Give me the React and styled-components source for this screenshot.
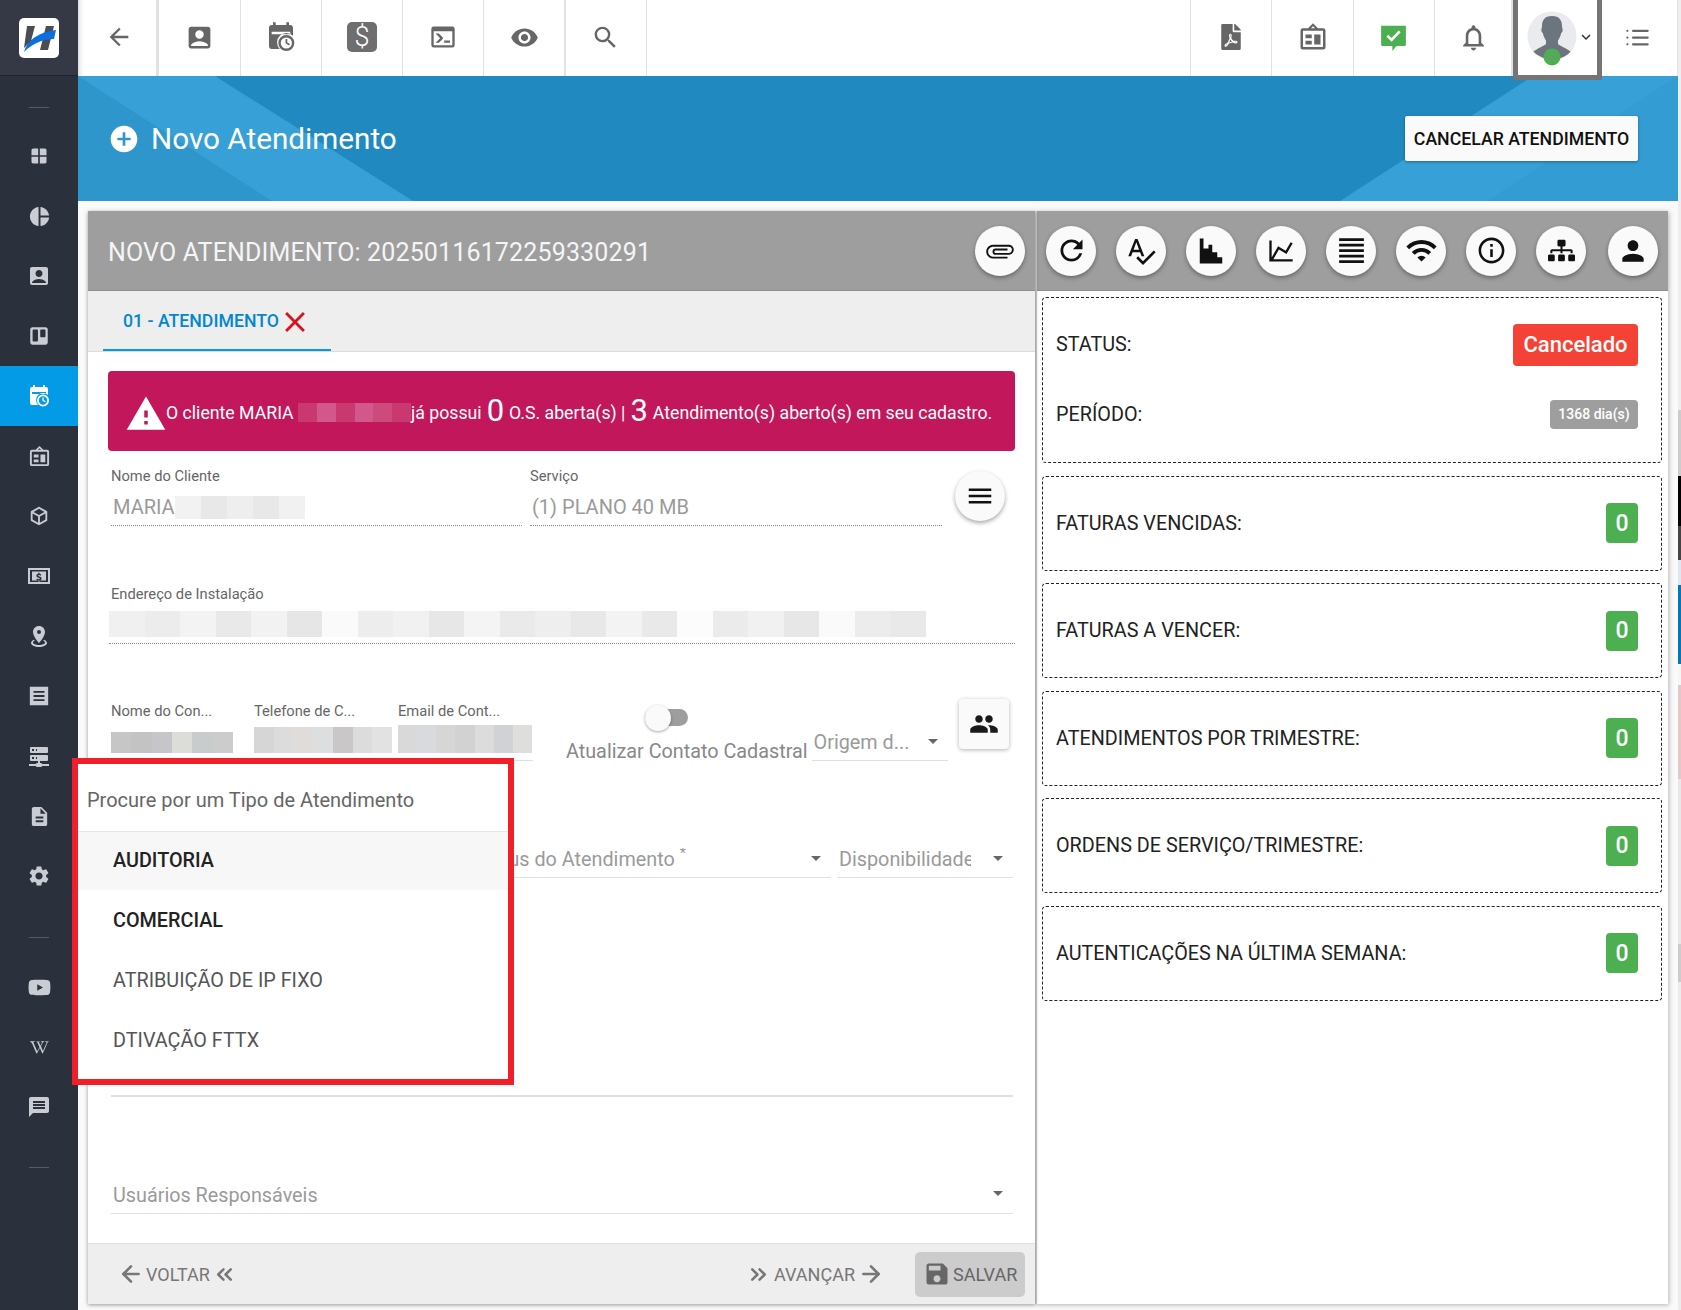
import React from 'react';
import styled, { createGlobalStyle } from 'styled-components';
import {
  MdArrowBack, MdAccountBox, MdVisibility, MdSearch, MdNotificationsNone,
  MdKeyboardArrowDown, MdWindow, MdPieChart, MdDescription, MdSettings, MdMessage,
  MdAddCircle, MdAttachFile, MdRefresh, MdSpellcheck, MdFormatAlignJustify, MdWifi,
  MdInfoOutline, MdPerson, MdClose, MdWarning, MdMenu, MdPeople, MdSave,
} from 'react-icons/md';
import { FaFilePdf, FaTrello, FaYoutube, FaWikipediaW, FaSitemap } from 'react-icons/fa';
import { FiList, FiArrowLeft, FiArrowRight, FiChevronsLeft, FiChevronsRight } from 'react-icons/fi';

const GlobalStyle = createGlobalStyle`
  html, body { margin: 0; padding: 0; height: 100%; background: #fafafa; }
  body { font-family: Roboto, "Liberation Sans", sans-serif; color: #222; }
  * { box-sizing: border-box; }
`;

// desenhos que nao existem nos pacotes
const CalendarClock = ({ size = 30 }) => (
  <svg width={size} height={size} viewBox="0 0 24 24" fill="currentColor">
    <path d="M5 21c-1.100 0-2-.9-2-2V5c0-1.100.9-2 2-2h1V1h2v2h8V1h2v2h1c1.100 0 2 .9 2 2v6.100A7 7 0 0 0 11.100 21H5zM5 8v2h14V8H5z" />
    <path d="M16 10.500a6 6 0 1 0 0 12 6 6 0 0 0 0-12zm0 10.200a4.200 4.200 0 1 1 0-8.400 4.200 4.200 0 0 1 0 8.400zm-.6-7.200h1.300v2.600l2 1.200-.6 1-2.700-1.600v-3.200z" />
  </svg>
);

const Console = ({ size = 30 }) => (
  <svg width={size} height={size} viewBox="0 0 24 24" fill="currentColor">
    <path d="M20 19V7H4v12h16m0-16a2 2 0 0 1 2 2v14a2 2 0 0 1-2 2H4a2 2 0 0 1-2-2V5a2 2 0 0 1 2-2h16m-7 14v-2h5v2h-5m-3.420-4L5.570 9H8.400l3.300 3.300c.39.39.39 1.030 0 1.420L8.420 17H5.590l3.990-4z" />
  </svg>
);

const Board = ({ size = 30 }) => (
  <svg width={size} height={size} viewBox="0 0 24 24" fill="currentColor">
    <path d="M12 1l4 4h4a2 2 0 0 1 2 2v13a2 2 0 0 1-2 2H4a2 2 0 0 1-2-2V7a2 2 0 0 1 2-2h4l4-4zm0 2.400L10.400 5h3.200L12 3.400zM4 7v13h16V7H4zm2 3h5v3H6v-3zm0 5h5v3H6v-3zm7-5h5v8h-5v-8z" />
  </svg>
);

const ChatCheck = () => (
  <svg width="27" height="27" viewBox="0 0 24 24">
    <path fill="#4caf50" d="M1 1.500h22v17a1 1 0 0 1-1 1h-7.500L11 24v-4.500H2a1 1 0 0 1-1-1z" />
    <path fill="none" stroke="#fff" strokeWidth="2.400" d="M6.500 10.500l3.800 3.600 7.200-7.600" />
  </svg>
);

const Avatar = () => (
  <svg width="50" height="56" viewBox="0 0 50 56">
    <circle cx="25" cy="25" r="24.500" fill="#e9ebef" />
    <path fill="#6c757d" d="M25 5c8 0 10 5 10 10 0 2 1 3 .6 5-.3 1.300-1 2-1.400 2-.6 3-2 6-3.200 7.500v3.500c2 2 8 4 12.500 7.500-3 4-7 6-18.500 9.500C13.500 46 9.500 44 6.500 40.500c4.500-3.500 10.500-5.500 12.500-7.500v-3.500C17.800 28 16.400 25 15.800 22c-.4 0-1.100-.7-1.400-2-.4-2 .6-3 .6-5C15 10 17 5 25 5z" />
    <circle cx="25" cy="46" r="8.500" fill="#4caf50" />
    <path fill="none" stroke="#7a8f7e" strokeWidth="1.500" d="M20.500 46l3.200 3 6-6.500" />
  </svg>
);

const Logo = () => (
  <svg width="40" height="40" viewBox="0 0 40 40">
    <rect width="40" height="40" rx="5" fill="#fff" />
    <path fill="#4a4d52" d="M8 8h8l-4 15-7 7zM27 8h8l-6 24h-8z" />
    <path fill="#0c6fe0" d="M37 12l-2 9c-11 0-21 4-30 13 3-12 15-20 32-22z" />
  </svg>
);

const MapMarker = ({ size = 22 }) => (
  <svg width={size} height={size} viewBox="0 0 24 24" fill="currentColor">
    <path d="M12 2c3.310 0 6 2.660 6 5.950C18 12.410 12 19 12 19S6 12.410 6 7.950C6 4.660 8.690 2 12 2m0 4a2 2 0 0 0-2 2 2 2 0 0 0 2 2 2 2 0 0 0 2-2 2 2 0 0 0-2-2m8 13c0 2.210-3.580 4-8 4s-8-1.790-8-4c0-1.290 1.220-2.440 3.110-3.170l.64.910C6.670 17.190 6 17.810 6 18.500 6 19.880 8.690 21 12 21s6-1.120 6-2.500c0-.690-.670-1.310-1.750-1.760l.640-.910C18.780 16.560 20 17.710 20 19z" />
  </svg>
);

const ServerNetwork = ({ size = 24 }) => (
  <svg width={size} height={size} viewBox="0 0 24 24" fill="currentColor">
    <path d="M13 19h1a1 1 0 0 1 1 1h7v2h-7a1 1 0 0 1-1 1h-4a1 1 0 0 1-1-1H2v-2h7a1 1 0 0 1 1-1h1v-2H4a1 1 0 0 1-1-1v-4a1 1 0 0 1 1-1h16a1 1 0 0 1 1 1v4a1 1 0 0 1-1 1h-7v2M4 3h16a1 1 0 0 1 1 1v4a1 1 0 0 1-1 1H4a1 1 0 0 1-1-1V4a1 1 0 0 1 1-1m5 4h1V5H9v2m0 8h1v-2H9v2M5 5v2h2V5H5m0 8v2h2v-2H5z" />
  </svg>
);

const Receipt = ({ size = 22 }) => (
  <svg width={size} height={size} viewBox="0 0 24 24" fill="currentColor">
    <path d="M2 2h20v20H2zM6 6.500v2h12v-2zM6 11v2h12v-2zM6 15.500v2h12v-2z" fillRule="evenodd" />
  </svg>
);

const Cash = ({ size = 24 }) => (
  <svg width={size} height={size} viewBox="0 0 24 24" fill="currentColor">
    <path fillRule="evenodd" d="M1 4h22v16H1zM3 6v12h18V6zM5 7.500h14v9H5zM12.700 8.800h-1.400v1c-1.200.2-1.900 1-1.900 2 0 1.200 1 1.700 2.200 2 .9.2 1.200.4 1.200.8 0 .4-.4.700-1 .7-.7 0-1.200-.3-1.600-.8l-.9.9c.4.600 1.100 1 2 1.100v.9h1.400v-.9c1.200-.2 1.900-1 1.900-2 0-1.300-1-1.800-2.200-2.100-.9-.2-1.200-.4-1.200-.7 0-.4.300-.6.900-.6.600 0 1 .2 1.400.6l.8-1c-.5-.5-1.100-.8-1.800-.9z" />
  </svg>
);

const CubeOutline = ({ size = 24 }) => (
  <svg width={size} height={size} viewBox="0 0 24 24" fill="currentColor">
    <path d="M21 16.500c0 .38-.21.71-.53.88l-7.900 4.440c-.16.12-.36.18-.57.18s-.41-.06-.57-.18l-7.900-4.440A.991.991 0 0 1 3 16.500v-9c0-.38.21-.71.53-.88l7.900-4.440c.16-.12.36-.18.57-.18s.41.06.57.18l7.900 4.440c.32.170.53.500.53.880v9M12 4.150L6.040 7.500 12 10.850l5.960-3.350L12 4.150M5 15.910l6 3.380v-6.710L5 9.210v6.700m14 0v-6.700l-6 3.370v6.710l6-3.380z" />
  </svg>
);

const Steps = ({ size = 30 }) => (
  <svg width={size} height={size} viewBox="0 0 24 24" fill="currentColor">
    <path d="M3 2h3v8h4V7h3v6h4v4h4v5H3z" />
  </svg>
);

const ChartLine = ({ size = 28 }) => (
  <svg width={size} height={size} viewBox="0 0 24 24" fill="currentColor">
    <path d="M16 11.780l4.240-7.330 1.730 1L16.740 14.500l-6.510-3.750L5.460 19H22v2H2V3h2v14.540L9.500 8z" />
  </svg>
);

const LOGO_ICONS = [
  { id: 'm1', icon: <MdWindow size={20} /> },
  { id: 'm2', icon: <MdPieChart size={23} /> },
  { id: 'm3', icon: <MdAccountBox size={24} /> },
  { id: 'm4', icon: <FaTrello size={20} /> },
  { id: 'm5', icon: <CalendarClock size={24} />, active: true },
  { id: 'm6', icon: <Board size={23} /> },
  { id: 'm7', icon: <CubeOutline size={22} /> },
  { id: 'm8', icon: <Cash size={24} /> },
  { id: 'm9', icon: <MapMarker size={24} /> },
  { id: 'm10', icon: <Receipt size={22} /> },
  { id: 'm11', icon: <ServerNetwork size={24} /> },
  { id: 'm12', icon: <MdDescription size={23} /> },
  { id: 'm13', icon: <MdSettings size={24} /> },
];

const EXTRA_ICONS = [
  { id: 'e1', icon: <FaYoutube size={23} /> },
  { id: 'e2', icon: <FaWikipediaW size={19} /> },
  { id: 'e3', icon: <MdMessage size={24} /> },
];

const TOOLS = [
  { id: 't1', icon: <MdRefresh size={33} /> },
  { id: 't2', icon: <MdSpellcheck size={32} /> },
  { id: 't3', icon: <Steps /> },
  { id: 't4', icon: <ChartLine /> },
  { id: 't5', icon: <MdFormatAlignJustify size={33} /> },
  { id: 't6', icon: <MdWifi size={33} /> },
  { id: 't7', icon: <MdInfoOutline size={31} /> },
  { id: 't8', icon: <FaSitemap size={27} /> },
  { id: 't9', icon: <MdPerson size={32} /> },
];

const COUNTERS = [
  'FATURAS VENCIDAS:',
  'FATURAS A VENCER:',
  'ATENDIMENTOS POR TRIMESTRE:',
  'ORDENS DE SERVIÇO/TRIMESTRE:',
  'AUTENTICAÇÕES NA ÚLTIMA SEMANA:',
];

const TIPOS = [
  { label: 'AUDITORIA', bold: true, hover: true },
  { label: 'COMERCIAL', bold: true },
  { label: 'ATRIBUIÇÃO DE IP FIXO' },
  { label: 'DTIVAÇÃO FTTX' },
];

const MOSAIC = {
  alert: ['#c9386f', '#d2578a', '#c9386f', '#d2578a', '#cd4a7d', '#c9386f'],
  name: ['#f2f2f2', '#e8e8e8', '#eeeeee', '#e8e8e8', '#f1f1f1'],
  addr: ['#f0f0f0', '#ececec', '#f3f3f3', '#e9e9e9', '#f2f2f2', '#e6e6e6', '#fafafa', '#ededed', '#f1f1f1', '#e7e7e7', '#f4f4f4', '#eaeaea', '#eeeeee', '#e8e8e8', '#f3f3f3', '#e9e9e9', '#fcfcfc', '#ebebeb', '#f1f1f1', '#e7e7e7', '#fafafa', '#ececec', '#e9e9e9'],
  c1: ['#c6c6c6', '#c3c3c3', '#c6c6ca', '#dcdcd8', '#c8cccc', '#cccccc'],
  c2: ['#d6d6d6', '#dcdcdc', '#dfdcda', '#dcdee0', '#c9c7c8', '#dcdcdc', '#e2e2e2'],
  c3: ['#d9d9d9', '#d8dade', '#d6d6d6', '#d2d2d2', '#dcdcdc', '#d0d2d6', '#dededc'],
};

const Page = styled.div`
  position: relative;
  display: flex;
  width: 100%;
  height: 100vh;
  overflow: hidden;
`;

const Sidebar = styled.nav`
  flex: 0 0 78px;
  background: #2b303d;
  color: #c9ccd3;
`;

const LogoBox = styled.div`
  height: 76px;
  display: flex;
  align-items: center;
  justify-content: center;
  background: #343945;
  border-bottom: 1px solid #20242e;
`;

const SideRule = styled.div`
  height: ${(p) => p.$h}px;
  padding-top: ${(p) => p.$top}px;
  &::before {
    content: '';
    display: block;
    width: 20px;
    height: 1px;
    margin: 0 auto;
    background: #555a66;
  }
`;

const SideItem = styled.div`
  height: 60px;
  display: flex;
  align-items: center;
  justify-content: center;
  background: ${(p) => (p.$active ? '#039be5' : 'transparent')};
  color: ${(p) => (p.$active ? '#fff' : '#c9ccd3')};
`;

const Main = styled.main`
  flex: 1;
  min-width: 0;
  display: flex;
  flex-direction: column;
`;

const TopBar = styled.header`
  flex: 0 0 76px;
  height: 76px;
  min-height: 0;
  display: flex;
  background: #fff;
  position: relative;
  z-index: 3;
  margin-right: 3px;
  box-shadow: inset 6px 0 6px -6px rgba(0, 0, 0, 0.25);
`;

const TopCell = styled.div`
  flex: 0 0 ${(p) => p.$w || 81.3}px;
  display: flex;
  align-items: center;
  justify-content: center;
  padding-left: ${(p) => p.$padLeft || 0}px;
  padding-right: ${(p) => p.$pad || 0}px;
  padding-bottom: 2px;
  color: #666;
  border-right: ${(p) => p.$line || 1}px solid #e2e2e2;
`;

const TopGap = styled.div`
  flex: 1;
  border-right: 1px solid #e2e2e2;
`;

const DollarBox = styled.div`
  width: 30px;
  height: 30px;
  border-radius: 5px;
  background: #6e6e6e;
  color: #fff;
  display: flex;
  align-items: center;
  justify-content: center;
  font-size: 27px;
  font-weight: 300;
`;

const AvatarCell = styled.div`
  position: relative;
  flex: 0 0 89px;
  height: 80px;
  display: flex;
  align-items: flex-start;
  padding: 11px 0 0 9px;
  background: #fff;
  color: #333;
  border: solid #757575;
  border-width: 0 5px 5px 5px;
  & > svg:last-child { margin-top: 17px; }
`;

const Hero = styled.section`
  flex: 0 0 125px;
  position: relative;
  display: flex;
  align-items: center;
  justify-content: space-between;
  padding: 0 40px 0 30px;
  margin-right: 3px;
  background: #2089bf;
  overflow: hidden;
`;

const HeroStripe = styled.div`
  position: absolute;
  inset: 0;
  background: ${(p) => p.$bg};
  clip-path: polygon(${(p) => p.$points});
`;

const HeroTitle = styled.h1`
  position: relative;
  z-index: 1;
  margin: 0;
  display: flex;
  align-items: center;
  gap: 11px;
  color: #fff;
  font-size: 29.7px;
  font-weight: 400;
`;

const CancelButton = styled.button`
  position: relative;
  z-index: 1;
  width: 233px;
  height: 45px;
  border: 0;
  border-radius: 2px;
  background: #fafafa;
  color: #111;
  font: 500 17.700px Roboto, sans-serif;
  box-shadow: 0 1px 3px rgba(0, 0, 0, 0.35);
`;

const Content = styled.div`
  flex: 1;
  min-height: 0;
  display: flex;
  padding: 10px 13px 6px 10px;
`;

const LeftPanel = styled.section`
  position: relative;
  flex: 0 0 947px;
  width: 947px;
  min-width: 0;
  display: flex;
  flex-direction: column;
  background: #fff;
  box-shadow: 0 1px 4px rgba(0, 0, 0, 0.4);
`;

const RightPanel = styled.section`
  flex: 1;
  min-width: 0;
  display: flex;
  flex-direction: column;
  background: #fff;
  border-left: 2px solid #cfcfcf;
  box-shadow: 1px 1px 5px rgba(0, 0, 0, 0.28);
`;

const PanelHead = styled.div`
  flex: 0 0 80px;
  display: flex;
  align-items: center;
  background: #9e9e9e;
  padding: ${(p) => (p.$tools ? '0 0 0 9px' : '0 10px 0 20px')};
  gap: ${(p) => (p.$tools ? '20px' : '0')};
  justify-content: ${(p) => (p.$tools ? 'flex-start' : 'space-between')};
  border-bottom: 1px solid #8e8e8e;
`;

const PanelTitle = styled.div`
  color: #f5f5f5;
  font-size: 25px;
  letter-spacing: 0.15px;
  padding-top: 3px;
`;

const RoundButton = styled.button`
  flex: 0 0 50px;
  height: 50px;
  padding: 0;
  border: 0;
  border-radius: 50%;
  background: #fafafa;
  color: #111;
  display: flex;
  align-items: center;
  justify-content: center;
  box-shadow: 0 2px 4px rgba(0, 0, 0, 0.35);
  &:last-child { margin-left: 2px; }
`;

const ClipIcon = styled(MdAttachFile)`
  transform: rotate(90deg);
`;

const TabBar = styled.div`
  flex: 0 0 61px;
  background: #eeeeee;
  border-bottom: 1px solid #dcdcdc;
  padding-left: 15px;
`;

const Tab = styled.div`
  width: 228px;
  height: 60px;
  display: flex;
  align-items: center;
  padding: 2px 0 0 20px;
  color: #0288d1;
  font-size: 17.700px;
  font-weight: 500;
  border-bottom: 2px solid #039be5;
  svg { color: #d9111a; margin: 2px -7px 0 -1px; }
`;

const Body = styled.div`
  flex: 1;
  min-height: 0;
  padding: 19px 20px 0;
`;

const Alert = styled.div`
  height: 80px;
  display: flex;
  align-items: center;
  padding: 3px 0 0 20px;
  border-radius: 4px;
  background: #c2185b;
  color: #fff;
  font-size: 17.700px;
  white-space: pre;
  overflow: hidden;
`;

const AlertIcon = styled(MdWarning)`
  margin: 3px -1px 0 -3px;
`;

const BigNumber = styled.span`
  font-size: 31px;
  line-height: 1;
  margin: 0 5px 5px 5px;
`;

const Mosaic = styled.div`
  display: flex;
  flex: ${(p) => (p.$w ? `0 0 ${p.$w}px` : '1')};
  height: ${(p) => p.$h}px;
`;

const Tile = styled.span`
  flex: 1;
  background: ${(p) => p.$c};
`;

const Row = styled.div`
  display: flex;
  align-items: flex-start;
  margin-top: ${(p) => p.$top || 0}px;
`;

const Field = styled.div`
  flex: ${(p) => (p.$w ? `0 0 ${p.$w}px` : '1')};
  margin-left: ${(p) => p.$left || 0}px;
  min-width: 0;
`;

const FieldLabel = styled.div`
  height: 20px;
  padding-left: ${(p) => p.$pad || 0}px;
  font-size: 14.700px;
  line-height: 20px;
  color: #666;
  white-space: nowrap;
`;

const FieldValue = styled.div`
  display: flex;
  align-items: center;
  height: 40px;
  padding: 3px 0 0 2px;
  font-size: 20px;
  color: #9a9a9a;
  border-bottom: 1px dotted #8a8a8a;
`;

const AddressValue = styled(FieldValue)`
  height: 40px;
  padding: 1px 0 0 0;
  & > div { max-width: 817px; }
`;

const ContactValue = styled.div`
  display: flex;
  align-items: flex-end;
  height: 40px;
  border-bottom: 1px solid #e0e0e0;
  padding-bottom: 7px;
`;

const MenuFab = styled(RoundButton)`
  margin: 5px 0 0 13px;
  &:last-child { margin-left: 13px; }
`;

const ToggleColumn = styled.div`
  flex: 0 0 235px;
  margin-left: 33px;
  font-size: 19.800px;
  color: #888;
  white-space: nowrap;
`;

const Toggle = styled.div`
  position: relative;
  width: 43px;
  height: 17px;
  margin: 8px 0 14px 79px;
  border-radius: 9px;
  background: #9e9e9e;
  &::before {
    content: '';
    position: absolute;
    left: 0;
    top: -4px;
    width: 26px;
    height: 26px;
    border-radius: 50%;
    background: #fafafa;
    box-shadow: 0 1px 3px rgba(0, 0, 0, 0.35);
  }
`;

const Select = styled.div`
  flex: ${(p) => (p.$w ? `0 0 ${p.$w}px` : '1')};
  min-width: 0;
  height: ${(p) => p.$h || 36}px;
  margin-left: ${(p) => p.$left || 0}px;
  margin-top: ${(p) => p.$top || 0}px;
  margin-right: ${(p) => p.$right || 0}px;
  display: flex;
  align-items: center;
  justify-content: space-between;
  padding: 0 10px 0 2px;
  font-size: 19.800px;
  color: #9a9a9a;
  white-space: nowrap;
  border-bottom: 1.500px solid #e0e0e0;
  &::after {
    content: '';
    flex: none;
    width: 0;
    height: 0;
    margin-bottom: 3px;
    border-left: 5.500px solid transparent;
    border-right: 5.500px solid transparent;
    border-top: 5.500px solid #666;
  }
`;

const SelectText = styled.span`
  overflow: hidden;
  max-width: ${(p) => p.$max || 'none'};
  sup { font-size: 14px; line-height: 0; }
`;

const PeopleButton = styled.button`
  flex: 0 0 50px;
  height: 50px;
  margin: -2px 0 0 11px;
  padding: 0;
  border: 0;
  border-radius: 4px;
  background: #fafafa;
  color: #1a1a1a;
  display: flex;
  align-items: center;
  justify-content: center;
  box-shadow: 0 1px 4px rgba(0, 0, 0, 0.3);
`;

const PlainLine = styled.div`
  height: 1.500px;
  margin: ${(p) => p.$top}px 2px 0 3px;
  background: #e0e0e0;
`;

const Popup = styled.div`
  position: absolute;
  z-index: 4;
  left: -16px;
  top: 547px;
  width: 442px;
  height: 327px;
  background: #fff;
  border: 6px solid #f01f29;
`;

const PopupSearch = styled.div`
  height: 68px;
  display: flex;
  align-items: center;
  padding: 5px 0 0 9px;
  font-size: 20px;
  color: #666;
  border-bottom: 1px solid #e6e6e6;
`;

const PopupItem = styled.div`
  height: 60px;
  display: flex;
  align-items: center;
  padding-left: 35px;
  font-size: 19.800px;
  font-weight: ${(p) => (p.$bold ? 500 : 400)};
  color: ${(p) => (p.$bold ? '#222' : '#555')};
  background: ${(p) => (p.$hover ? '#f7f7f7' : '#fff')};
  &:nth-child(2) { height: 58px; padding-bottom: 2px; }
`;

const Footer = styled.footer`
  flex: 0 0 61px;
  display: flex;
  align-items: center;
  padding: 0 10px 0 30px;
  background: #eeeeee;
  border-top: 1px solid #e0e0e0;
  color: #777;
  font-size: 18px;
`;

const FootLink = styled.div`
  display: flex;
  align-items: center;
  gap: ${(p) => p.$gap || 2}px;
  margin-right: ${(p) => p.$right || 0}px;
  margin-left: ${(p) => (p.$push ? 'auto' : '0')};
`;

const SaveButton = styled.button`
  width: 110px;
  height: 45px;
  padding: 0 0 0 8px;
  border: 0;
  border-radius: 5px;
  background: #cccccc;
  color: #666;
  font: 400 18px Roboto, sans-serif;
  display: flex;
  align-items: center;
  gap: 2px;
`;

const Cards = styled.div`
  display: flex;
  flex-direction: column;
  gap: 12.500px;
  padding: 6px 6px 0 5px;
`;

const Card = styled.div`
  border: 1px dashed #222;
  border-radius: 4px;
  height: ${(p) => p.$h || 95}px;
  padding: 0 23px ${(p) => p.$bottom || 0}px 13px;
  display: flex;
  flex-direction: column;
  justify-content: center;
  gap: ${(p) => p.$gap || 0}px;
`;

const CardRow = styled.div`
  display: flex;
  align-items: center;
  justify-content: space-between;
  font-size: 19.800px;
  color: #222;
`;

const Badge = styled.div`
  display: flex;
  align-items: center;
  justify-content: center;
  width: ${(p) => p.$w}px;
  height: ${(p) => p.$h}px;
  border-radius: 4px;
  background: ${(p) => p.$bg};
  color: #fff;
  font-size: ${(p) => p.$size}px;
  font-weight: 500;
`;

// tira de outra janela que aparece na beira direita do print
const ScrollEdge = styled.div`
  position: absolute;
  right: 0;
  top: 0;
  width: 3px;
  height: 100%;
  background: linear-gradient(
    #eeeeee 0 410px,
    #cccccc 410px 476px,
    #000000 476px 526px,
    #444444 526px 560px,
    #dfe6f5 560px 585px,
    #0277bd 585px 664px,
    #f5f5f5 664px 685px,
    #e3c8c8 685px 779px,
    #e8e8e8 779px 944px,
    #cccccc 944px 982px,
    #ececec 982px
  );
`;

export default function App() {
  return (
    <Page>
      <GlobalStyle />
      <Sidebar>
        <LogoBox><Logo /></LogoBox>
        <SideRule $h={50} $top={31} />
        {LOGO_ICONS.map((m) => (
          <SideItem key={m.id} $active={m.active}>{m.icon}</SideItem>
        ))}
        <SideRule $h={51} $top={31} />
        {EXTRA_ICONS.map((m) => (
          <SideItem key={m.id}>{m.icon}</SideItem>
        ))}
        <SideRule $h={30} $top={30} />
      </Sidebar>

      <Main>
        <TopBar>
          <TopCell $line={3} $padLeft={3}><MdArrowBack size={28} /></TopCell>
          <TopCell><MdAccountBox size={29} /></TopCell>
          <TopCell><CalendarClock size={32} /></TopCell>
          <TopCell><DollarBox>$</DollarBox></TopCell>
          <TopCell><Console size={28} /></TopCell>
          <TopCell $line={2}><MdVisibility size={29} /></TopCell>
          <TopCell><MdSearch size={29} /></TopCell>
          <TopGap />
          <TopCell><FaFilePdf size={26} /></TopCell>
          <TopCell><Board size={30} /></TopCell>
          <TopCell><ChatCheck /></TopCell>
          <TopCell $w={78} $line={2}><MdNotificationsNone size={31} /></TopCell>
          <AvatarCell><Avatar /><MdKeyboardArrowDown size={18} /></AvatarCell>
          <TopCell $w={76} $line={0} $pad={4}><FiList size={27} strokeWidth={2} /></TopCell>
        </TopBar>

        <Hero>
          <HeroStripe $bg="#37a0d6" $points="0 0, 137px 0, 335px 100%, 0 100%" />
          <HeroStripe $bg="#2f96cc" $points="0 0, 194px 100%, 0 100%" />
          <HeroStripe $bg="#37a0d6" $points="calc(100% - 145px) 0, 100% 0, 100% 100%, calc(100% - 338px) 100%" />
          <HeroStripe $bg="#339cd2" $points="100% 0, 100% 100%, calc(100% - 191px) 100%" />
          <HeroTitle><MdAddCircle size={32} />Novo Atendimento</HeroTitle>
          <CancelButton>CANCELAR ATENDIMENTO</CancelButton>
        </Hero>

        <Content>
          <LeftPanel>
            <PanelHead>
              <PanelTitle>NOVO ATENDIMENTO: 20250116172259330291</PanelTitle>
              <RoundButton><ClipIcon size={30} /></RoundButton>
            </PanelHead>
            <TabBar>
              <Tab>01 - ATENDIMENTO<MdClose size={34} /></Tab>
            </TabBar>

            <Body>
              <Alert>
                <AlertIcon size={42} />
                O cliente MARIA <Mosaic $w={113} $h={19}>{MOSAIC.alert.map((c, i) => <Tile key={i} $c={c} />)}</Mosaic>já possui
                <BigNumber>0</BigNumber>O.S. aberta(s) |<BigNumber>3</BigNumber>Atendimento(s) aberto(s) em seu cadastro.
              </Alert>

              <Row $top={15}>
                <Field $w={411} $left={3}>
                  <FieldLabel>Nome do Cliente</FieldLabel>
                  <FieldValue>
                    MARIA
                    <Mosaic $w={130} $h={23}>{MOSAIC.name.map((c, i) => <Tile key={i} $c={c} />)}</Mosaic>
                  </FieldValue>
                </Field>
                <Field $w={412} $left={8}>
                  <FieldLabel>Serviço</FieldLabel>
                  <FieldValue>(1) PLANO 40 MB</FieldValue>
                </Field>
                <MenuFab><MdMenu size={30} /></MenuFab>
              </Row>

              <Row $top={58}>
                <Field $left={1}>
                  <FieldLabel $pad={2}>Endereço de Instalação</FieldLabel>
                  <AddressValue>
                    <Mosaic $h={26}>{MOSAIC.addr.map((c, i) => <Tile key={i} $c={c} />)}</Mosaic>
                  </AddressValue>
                </Field>
              </Row>

              <Row $top={57}>
                <Field $w={134} $left={3}>
                  <FieldLabel>Nome do Con...</FieldLabel>
                  <ContactValue><Mosaic $w={122} $h={21}>{MOSAIC.c1.map((c, i) => <Tile key={i} $c={c} />)}</Mosaic></ContactValue>
                </Field>
                <Field $w={138} $left={9}>
                  <FieldLabel>Telefone de C...</FieldLabel>
                  <ContactValue><Mosaic $w={138} $h={26}>{MOSAIC.c2.map((c, i) => <Tile key={i} $c={c} />)}</Mosaic></ContactValue>
                </Field>
                <Field $w={135} $left={6}>
                  <FieldLabel>Email de Cont...</FieldLabel>
                  <ContactValue><Mosaic $w={134} $h={28}>{MOSAIC.c3.map((c, i) => <Tile key={i} $c={c} />)}</Mosaic></ContactValue>
                </Field>
                <ToggleColumn>
                  <Toggle />
                  Atualizar Contato Cadastral
                </ToggleColumn>
                <Select $w={136} $left={4} $h={36} $top={24}>
                  <SelectText>Origem d...</SelectText>
                </Select>
                <PeopleButton><MdPeople size={30} /></PeopleButton>
              </Row>

              <Row $top={79}>
                <Select $w={356} $left={3} />
                <Select $w={360} $left={4}>
                  <SelectText>Status do Atendimento <sup>*</sup></SelectText>
                </Select>
                <Select $w={176} $left={6}>
                  <SelectText $max="132px">Disponibilidade</SelectText>
                </Select>
              </Row>

              <PlainLine $top={217} />

              <Row $top={81}>
                <Select $left={3} $right={2}><SelectText>Usuários Responsáveis</SelectText></Select>
              </Row>
            </Body>

            <Footer>
              <FootLink>
                <FiArrowLeft size={26} strokeWidth={2.4} /><span>VOLTAR</span><FiChevronsLeft size={25} strokeWidth={2.4} />
              </FootLink>
              <FootLink $push $gap={3} $right={31}>
                <FiChevronsRight size={25} strokeWidth={2.4} /><span>AVANÇAR</span><FiArrowRight size={26} strokeWidth={2.4} />
              </FootLink>
              <SaveButton><MdSave size={28} />SALVAR</SaveButton>
            </Footer>

            <Popup>
              <PopupSearch>Procure por um Tipo de Atendimento</PopupSearch>
              {TIPOS.map((t) => (
                <PopupItem key={t.label} $bold={t.bold} $hover={t.hover}>{t.label}</PopupItem>
              ))}
            </Popup>
          </LeftPanel>

          <RightPanel>
            <PanelHead $tools>
              {TOOLS.map((t) => (
                <RoundButton key={t.id}>{t.icon}</RoundButton>
              ))}
            </PanelHead>
            <Cards>
              <Card $h={166} $gap={34} $bottom={8}>
                <CardRow>STATUS:<Badge $w={125} $h={42} $bg="#f44336" $size={22}>Cancelado</Badge></CardRow>
                <CardRow>PERÍODO:<Badge $w={88} $h={29} $bg="#9e9e9e" $size={14}>1368 dia(s)</Badge></CardRow>
              </Card>
              {COUNTERS.map((label) => (
                <Card key={label}>
                  <CardRow>{label}<Badge $w={32} $h={40} $bg="#4caf50" $size={23}>0</Badge></CardRow>
                </Card>
              ))}
            </Cards>
          </RightPanel>
        </Content>
      </Main>
      <ScrollEdge />
    </Page>
  );
}
